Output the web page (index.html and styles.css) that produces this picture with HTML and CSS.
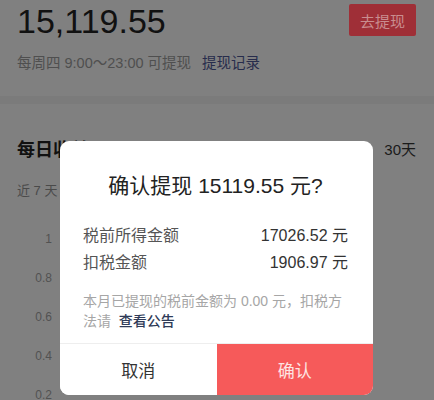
FILE: index.html
```html
<!DOCTYPE html>
<html lang="zh-CN">
<head>
  <meta charset="UTF-8">
  <meta name="viewport" content="width=device-width, initial-scale=1.0">
  <title>提现</title>
  <link rel="stylesheet" href="styles.css">
</head>
<body>
  <div class="page">
    <section class="balance">
      <div class="balance-top">
        <div class="amount">15,119.55</div>
        <button class="withdraw-btn">去提现</button>
      </div>
      <div class="balance-tip">
        <span>每周四 9:00～23:00 可提现</span>
        <a class="record-link">提现记录</a>
      </div>
    </section>

    <section class="daily">
      <div class="daily-head">
        <h2>每日收益</h2>
        <span class="range">30天</span>
      </div>
      <div class="daily-sub">近 7 天</div>
      <div class="axis">
        <div class="axis-label">1</div>
        <div class="axis-label">0.8</div>
        <div class="axis-label">0.6</div>
        <div class="axis-label">0.4</div>
        <div class="axis-label">0.2</div>
      </div>
    </section>
  </div>

  <div class="dialog">
    <div class="dialog-body">
      <h3 class="dialog-title">确认提现 15119.55 元?</h3>
      <div class="dialog-row">
        <span class="row-label">税前所得金额</span>
        <span class="row-value">17026.52 元</span>
      </div>
      <div class="dialog-row">
        <span class="row-label">扣税金额</span>
        <span class="row-value">1906.97 元</span>
      </div>
      <p class="dialog-note">本月已提现的税前金额为 0.00 元，扣税方法请&nbsp;&nbsp;<a class="note-link">查看公告</a></p>
    </div>
    <div class="dialog-actions">
      <button class="btn-cancel">取消</button>
      <button class="btn-confirm">确认</button>
    </div>
  </div>
</body>
</html>
```

FILE: styles.css
```css
body {
  margin: 0;
  padding: 0;
  width: 434px;
  height: 400px;
  overflow: hidden;
  background-color: #7b7b7b;
  font-family: "Liberation Sans", "Noto Sans CJK SC", sans-serif;
}

.page {
  display: flex;
  flex-direction: column;
  gap: 8px;
}

.balance {
  background-color: #808080;
  height: 96px;
  padding: 0 18px 0 17px;
}

.balance-top {
  display: flex;
  justify-content: space-between;
  align-items: flex-start;
}

.amount {
  font-size: 34px;
  line-height: 40px;
  margin-top: 1px;
  color: #111;
}

.withdraw-btn {
  margin-top: 4px;
  height: 32px;
  padding: 0 11px;
  border: none;
  border-radius: 2px;
  background-color: #9f2f37;
  color: #c98d8f;
  font-family: inherit;
  font-size: 15px;
}

.balance-tip {
  margin-top: 12px;
  font-size: 14.5px;
  line-height: 20px;
  color: #4f4f4f;
  display: flex;
  gap: 11px;
}

.record-link {
  color: #272c4c;
}

.daily {
  background-color: #808080;
  height: 300px;
  padding: 32px 18px 0 17px;
}

.daily-head {
  display: flex;
  justify-content: space-between;
  align-items: center;
  height: 24px;
}

.daily-head h2 {
  margin: 0;
  font-size: 18px;
  font-weight: bold;
  color: #111;
}

.range {
  font-size: 15px;
  color: #1a1a1a;
}

.daily-sub {
  margin-top: 22px;
  font-size: 13px;
  line-height: 18px;
  color: #4a4a4a;
}

.axis {
  margin-top: 20px;
  width: 35px;
}

.axis-label {
  height: 39px;
  line-height: 39px;
  text-align: right;
  font-size: 12px;
  color: #525252;
}

.dialog {
  position: absolute;
  left: 60px;
  top: 141px;
  width: 313px;
  background: #fff;
  border-radius: 9px;
  overflow: hidden;
}

.dialog-body {
  padding: 31px 25px 12px 23px;
}

.dialog-title {
  margin: 0 0 22px;
  text-align: center;
  font-size: 21px;
  line-height: 28px;
  font-weight: normal;
  color: #222;
}

.dialog-row {
  display: flex;
  justify-content: space-between;
  font-size: 16px;
  line-height: 27px;
}

.row-label {
  color: #555;
}

.row-value {
  color: #333;
}

.dialog-note {
  margin: 15px 0 0;
  font-size: 14px;
  line-height: 20px;
  color: #a6a6a6;
}

.note-link {
  color: #2f3b58;
  font-weight: 500;
}

.dialog-actions {
  display: flex;
  border-top: 1px solid #eee;
  height: 51px;
}

.dialog-actions button {
  flex: 1;
  border: none;
  font-family: inherit;
  font-size: 17px;
}

.btn-cancel {
  background: #fff;
  color: #333;
}

.btn-confirm {
  background: #f65a5a;
  color: #fde4e2;
}
```
